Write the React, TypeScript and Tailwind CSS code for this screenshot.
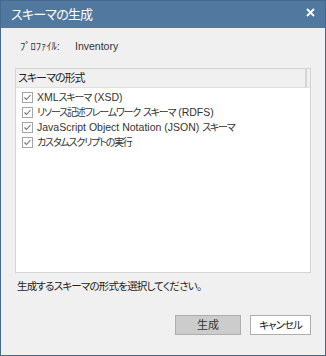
import React from "react";

function Check() {
  return (
    <span className="flex h-[11px] w-[11px] shrink-0 items-center justify-center border border-[#a5a5a5] bg-white">
      <svg width="9" height="9" viewBox="0 0 9 9">
        <path d="M1.5 4.5 L3.5 6.5 L7.5 2" fill="none" stroke="#707070" strokeWidth="1.1" />
      </svg>
    </span>
  );
}

type Seg = { t: string; jp?: boolean };

const items: Seg[][] = [
  [{ t: "XML" }, { t: "スキーマ", jp: true }, { t: " (XSD)" }],
  [{ t: "リソース記述フレームワーク", jp: true }, { t: " " }, { t: "スキーマ", jp: true }, { t: " (RDFS)" }],
  [{ t: "JavaScript Object Notation (JSON) " }, { t: "スキーマ", jp: true }],
  [{ t: "カスタムスクリプトの実行", jp: true }],
];

export default function App() {
  return (
    <div className="flex h-[356px] w-[326px] flex-col border border-[#45698f] bg-[#f0f0f0] font-['Liberation_Sans','Noto_Sans_CJK_JP',sans-serif] text-[11px] text-[#1e1e1e] [font-feature-settings:'palt']">
      <div className="flex h-[27px] shrink-0 items-center justify-between bg-[#51799f] pl-[10px] pr-[10px] text-white">
        <span className="text-[13px] leading-none tracking-[-0.8px]">スキーマの生成</span>
        <svg width="9" height="9" viewBox="0 0 9 9" className="mb-[4px]">
          <path d="M1 1 L8 8 M8 1 L1 8" stroke="white" strokeWidth="1.8" />
        </svg>
      </div>
      <div className="flex flex-1 flex-col px-[14px]">
        <div className="mt-[10px] flex h-[16px] items-center whitespace-nowrap pl-[5px] text-[10.5px] leading-none text-[#333]">
          <span className="w-[55px] shrink-0">ﾌﾟﾛﾌｧｲﾙ:</span>
          <span>Inventory</span>
        </div>
        <div className="mt-[14px] flex h-[205px] flex-col border border-[#d4d4d4] bg-white">
          <div className="flex h-[19px] shrink-0 border-b border-[#e0e0e0] bg-[#f0f0f0]">
            <div className="flex flex-1 items-center border-r-2 border-[#d6d6d6] pl-[2px] text-[11px] leading-none tracking-[-1px] text-[#222]">
              スキーマの形式
            </div>
            <div className="w-[3px]" />
          </div>
          <div className="flex flex-col pt-[2px]">
            {items.map((segs, i) => (
              <div key={i} className="flex h-[15px] items-center gap-[4px] whitespace-nowrap pl-[6px] leading-none text-[#333]">
                <Check />
                <span>
                  {segs.map((s, j) =>
                    s.jp ? (
                      <span key={j} className="text-[10px] tracking-[-1.2px]">
                        {s.t}
                      </span>
                    ) : (
                      <span key={j} className="whitespace-pre text-[10.5px]">
                        {s.t}
                      </span>
                    )
                  )}
                </span>
              </div>
            ))}
          </div>
        </div>
        <div className="mt-[5px] flex h-[16px] items-center whitespace-nowrap pl-[2px] text-[10.5px] leading-none tracking-[-0.8px] text-[#222]">
          生成するスキーマの形式を選択してください。
        </div>
        <div className="mt-[21px] flex justify-end gap-[9px]">
          <button className="flex h-[20px] w-[66px] items-center justify-center border border-[#adadad] bg-[#cccccc] text-[11px] leading-none text-[#333]">
            生成
          </button>
          <button className="flex h-[20px] w-[61px] items-center justify-center border border-[#adadad] bg-white text-[10.5px] leading-none tracking-[-1px] text-[#222]">
            キャンセル
          </button>
        </div>
      </div>
    </div>
  );
}
